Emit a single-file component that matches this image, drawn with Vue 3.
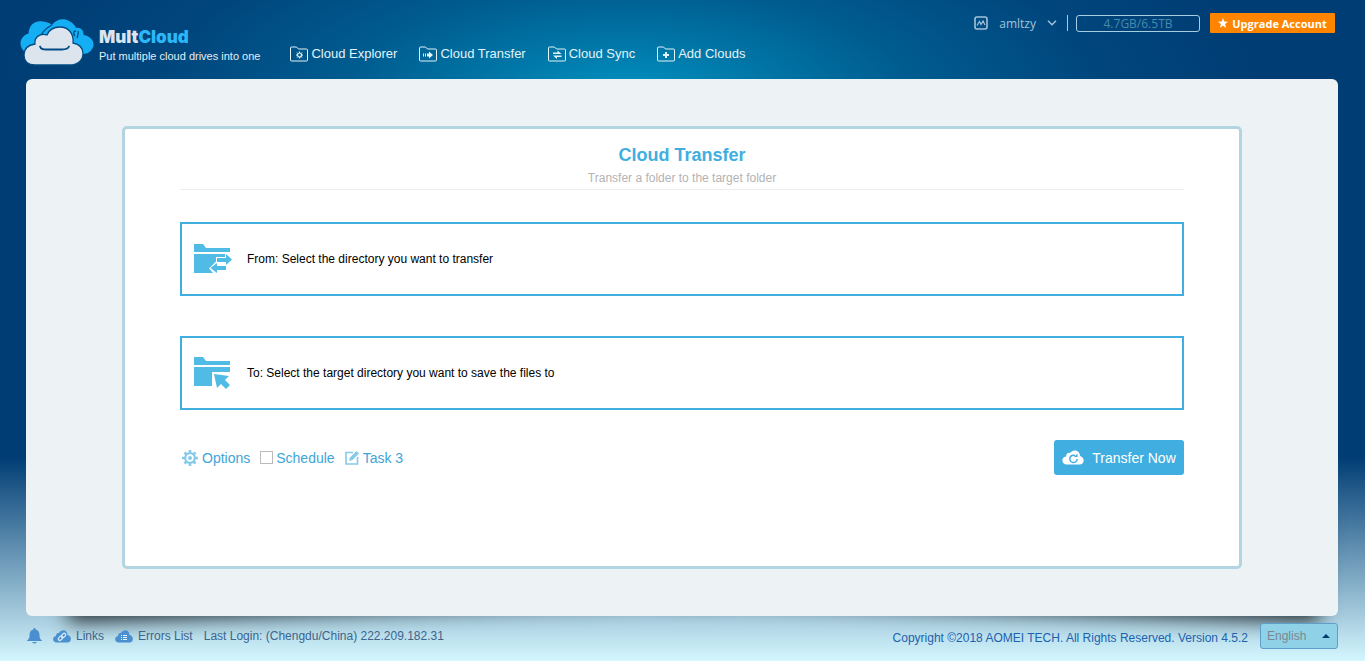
<script setup>
import { ref } from 'vue'

const navItems = [
  { key: 'explorer', label: 'Cloud Explorer' },
  { key: 'transfer', label: 'Cloud Transfer' },
  { key: 'sync', label: 'Cloud Sync' },
  { key: 'add', label: 'Add Clouds' }
]

const user = ref('amltzy')
const storage = ref('4.7GB/6.5TB')
const schedule = ref(false)
const language = ref('English')
</script>

<template>
  <div class="page">
    <header class="header">
      <a class="brand" href="#">
        <svg class="brand-logo" width="74" height="48" viewBox="0 0 74 48">
          <path d="M8 34 C1 33 -2 23 3 18 C5 15.500 7 15 8.500 14.500 C9 5 16 1 23 2.500 C27 3 30 4 32 6 C36 0 44 -1 49 2 C53 4 55 6 56 9 C61 8 64 12 63.500 16 C72 17 76 25 72 30 C70 34 66 35 62 35 Z" fill="#14aef5" />
          <path d="M32 6 C28 8 24 11 21 16 M56 12 C53 12 53 15 55 17 M58 12 C59 14 58 16 57 19" fill="none" stroke="#034b82" stroke-width="1.300" />
          <path d="M15 46 H50 C58 46 63 41 63 34.500 C63 28 58 25 53 24 C54 14 48 8 40 8 C34 8 29 11 27 16 C20 14 14 18 15 25 C8 26 4 30 4 36 C4 42 8 46 15 46 Z" fill="#dce4ee" stroke="#034b82" stroke-width="1.300" />
          <path d="M20 27.500 C21 31 24 30.500 28 30.500 H42 C46 30.500 48 30 49 27.500" fill="none" stroke="#034b82" stroke-width="1.800" stroke-linecap="round" />
        </svg>
        <span class="brand-text">
          <span class="brand-name">Mult<b>Cloud</b></span>
          <span class="brand-slogan">Put multiple cloud drives into one</span>
        </span>
      </a>

      <nav class="nav">
        <a v-for="item in navItems" :key="item.key" class="nav-item" href="#">
          <svg width="18" height="16" viewBox="0 0 18 16">
            <path d="M1.5 15 Q.5 15 .5 14 V2 Q.5 1 1.5 1 H6.5 L8.5 3 H16.5 Q17.5 3 17.5 4 V14 Q17.5 15 16.5 15 Z" fill="none" stroke="currentColor" />
            <g v-if="item.key === 'explorer'" fill="none" stroke="currentColor">
              <circle cx="9.5" cy="9" r="2" stroke-width="1.2" />
              <path d="M9.5 5.5V7M9.5 11v1.5M6 9h1.500M11.500 9H13M7 6.500l1 1M11 10.500l1 1M12 6.500l-1 1M8 10.500l-1 1" />
            </g>
            <path v-else-if="item.key === 'transfer'" d="M4 7.500h1v3H4zM6 7.500h1v3H6zM8 7.500h2V5.500L14 9l-4 3.500v-2H8z" fill="currentColor" />
            <path v-else-if="item.key === 'sync'" d="M5 6.500h4.500V4.500l4 3.500H5zM13.500 9.500H5l4 3.500v-2h4.500z" fill="currentColor" />
            <path v-else d="M8 6h2v2h2v2h-2v2H8v-2H6V8h2z" fill="currentColor" />
          </svg>
          <span>{{ item.label }}</span>
        </a>
      </nav>

      <div class="account">
        <button class="user" type="button">
          <svg width="14" height="14" viewBox="0 0 14 14" fill="none" stroke="currentColor">
            <rect x="1" y="1" width="12" height="12" rx="2" stroke-width="1.6" />
            <path d="M3 9.500 L5.500 5.500 L7 8.500 L9 5 L11 9" stroke-width="1.2" />
          </svg>
          <span>{{ user }}</span>
          <svg width="10" height="6" viewBox="0 0 10 6" fill="none" stroke="currentColor" stroke-width="1.500">
            <path d="M1 .7 L5 4.700 L9 .7" />
          </svg>
        </button>
        <span class="storage">{{ storage }}</span>
        <button class="upgrade" type="button">
          <svg width="10" height="10" viewBox="0 0 10 10">
            <path d="M5 0 L6.300 3.400 L10 3.700 L7.100 6.100 L8.100 9.800 L5 7.700 L1.900 9.800 L2.900 6.100 L0 3.700 L3.700 3.400 Z" fill="#fff" />
          </svg>
          Upgrade Account
        </button>
      </div>
    </header>

    <main class="panel">
      <section class="card">
        <div class="card-head">
          <h1>Cloud Transfer</h1>
          <p>Transfer a folder to the target folder</p>
        </div>

        <button class="picker" type="button">
          <svg width="38" height="32" viewBox="0 0 38 32" fill="#50bce6">
            <path d="M0 1h9l3 4h24v4H0z" />
            <path d="M0 11h31v19H0z" />
            <path d="M15 25.500l7-7h10V31H20z" fill="#fff" />
            <path d="M22 14h15v7H22z" fill="#fff" />
            <path d="M23 15h9v-4l6 5.500-6 5.500v-3h-9zM32 23h-9v-3l-6.500 5L23 30v-3h9z" />
          </svg>
          <span>From: Select the directory you want to transfer</span>
        </button>

        <button class="picker" type="button">
          <svg width="38" height="32" viewBox="0 0 38 32" fill="#50bce6">
            <path d="M0 0h9l3 4h24v4H0z" />
            <path d="M0 10h36v5H18v14H0z" />
            <path d="M20 17l15 2-4 4 5 5-4 4-5-5-4 4z" />
          </svg>
          <span>To: Select the target directory you want to save the files to</span>
        </button>

        <div class="actions">
          <button class="link-btn" type="button">
            <svg width="16" height="16" viewBox="0 0 16 16" fill="none" stroke="#86caea">
              <path d="M8 0v3M8 13v3M0 8h3M13 8h3M2.500 2.500l2 2M11.500 11.500l2 2M13.500 2.500l-2 2M4.500 11.500l-2 2" stroke-width="2.600" />
              <circle cx="8" cy="8" r="4.800" stroke-width="2.200" />
              <circle cx="8" cy="8" r="2" fill="#86caea" stroke="none" />
            </svg>
            Options
          </button>
          <label class="check">
            <input v-model="schedule" type="checkbox" />
            Schedule
          </label>
          <button class="link-btn task" type="button">
            <svg width="14" height="14" viewBox="0 0 14 14">
              <path d="M8 1.500H1V13h11.500V6" fill="none" stroke="#86caea" stroke-width="1.600" />
              <path d="M4 10l1-3.500L11.500 0 14 2.500 7.500 9z" fill="#86caea" />
            </svg>
            Task 3
          </button>
          <button class="transfer-btn" type="button">
            <svg width="22" height="15" viewBox="0 0 22 15">
              <path d="M5 14.500 C-1 14.500 -1 7 4 6.500 C4 3 7 2.500 8 3 C11 -1.500 18 0 18 6 C23 7 23 14.500 17.500 14.500 Z" fill="#fff" />
              <path d="M13 5.500 A3.700 3.700 0 1 0 15.200 9" fill="none" stroke="#40aee0" stroke-width="1.500" />
              <path d="M12 7h3.500V3.500z" fill="#40aee0" />
            </svg>
            Transfer Now
          </button>
        </div>
      </section>
    </main>

    <footer class="footer">
      <div class="footer-left">
        <button class="bell" type="button" aria-label="Notifications">
          <svg width="15" height="16" viewBox="0 0 15 16" fill="#4a90d0">
            <path d="M7.500 0 C8.500 0 8.700 1 8.700 1.500 C11.500 2 12.500 4.500 12.500 7 C12.500 10 13 11 15 12.500 V13 H0 V12.500 C2 11 2.500 10 2.500 7 C2.500 4.500 3.500 2 6.300 1.500 C6.300 1 6.500 0 7.500 0Z" />
            <path d="M5 14h5Q7.500 17 5 14z" />
          </svg>
        </button>
        <a class="foot-link" href="#">
          <svg width="18" height="13" viewBox="0 0 18 13">
            <path d="M4 12.500 C-1 12.500 -1 6.500 3 6 C3 3.500 4.500 2.500 6 3 C8 -1 14.500 -1 14.500 5 C19 5.500 19 12.500 14.500 12.500 Z" fill="#4a90d0" />
            <g fill="none" stroke="#d6edf7" stroke-width="1.200">
              <rect x="5" y="6.700" width="5" height="3" rx="1.500" transform="rotate(-45 7.500 8.200)" />
              <rect x="8" y="4" width="5" height="3" rx="1.500" transform="rotate(-45 10.500 5.500)" />
            </g>
          </svg>
          Links
        </a>
        <a class="foot-link" href="#">
          <svg width="18" height="13" viewBox="0 0 18 13">
            <path d="M4 12.500 C-1 12.500 -1 6.500 3 6 C3 3.500 4.500 2.500 6 3 C8 -1 14.500 -1 14.500 5 C19 5.500 19 12.500 14.500 12.500 Z" fill="#4a90d0" />
            <path d="M6 5.500h1M8 5.500h4M6 7.500h1M8 7.500h4M6 9.500h1M8 9.500h4" stroke="#e8f6fc" />
          </svg>
          Errors List
        </a>
        <span>Last Login: (Chengdu/China) 222.209.182.31</span>
      </div>
      <div class="footer-right">
        <span class="copyright">Copyright ©2018 AOMEI TECH. All Rights Reserved. Version 4.5.2</span>
        <div class="language">
          <select v-model="language" aria-label="Language">
            <option>English</option>
          </select>
        </div>
      </div>
    </footer>
  </div>
</template>

<style>
body {
  margin: 0;
}

* {
  box-sizing: border-box;
}
</style>

<style scoped>
.page {
  min-height: 100vh;
  display: flex;
  flex-direction: column;
  position: relative;
  z-index: 0;
  font-family: "Liberation Sans", Arial, sans-serif;
  font-size: 12px;
  background:
    radial-gradient(640px 240px at 46% 95px, #0093c2 0%, rgba(0, 134, 181, 0.85) 18%, rgba(0, 116, 165, 0.55) 45%, rgba(0, 94, 150, 0.25) 75%, rgba(0, 61, 116, 0) 100%) no-repeat 0 0 / 100% 79px,
    linear-gradient(to bottom, #003d74 0%, #003d74 69%, #a6cbdd 93%, #d5f8ff 100%);
}

button {
  font: inherit;
  padding: 0;
  border: none;
  background: none;
  cursor: pointer;
}

a {
  color: inherit;
  text-decoration: none;
}

svg {
  flex-shrink: 0;
}

/* header */
.header {
  height: 79px;
  display: flex;
  align-items: flex-start;
  padding: 0 30px 0 20px;
  color: #e3eef5;
}

.brand {
  display: flex;
  gap: 5px;
  padding-top: 19px;
}

.brand-text {
  display: flex;
  flex-direction: column;
  padding-top: 8px;
}

.brand-name {
  font-family: Inter, sans-serif;
  font-size: 17px;
  line-height: 21px;
  font-weight: 900;
  color: #dce4ee;
}

.brand-name b {
  font-weight: 900;
  color: #2cb8f8;
}

.brand-slogan {
  font-size: 11px;
  line-height: 16px;
}

.nav {
  display: flex;
  gap: 22px;
  padding: 45px 0 0 30px;
}

.nav-item {
  display: flex;
  align-items: center;
  gap: 3px;
  font-size: 13px;
  line-height: 17px;
  color: #e3f3fa;
}

.account {
  display: flex;
  align-items: center;
  margin-left: auto;
  padding-top: 13px;
  font-family: "Open Sans", sans-serif;
}

.user {
  display: flex;
  align-items: center;
  gap: 11px;
  height: 16px;
  padding-right: 10px;
  border-right: 1px solid #a9cde0;
  color: #a3c3da;
}

.storage {
  width: 124px;
  height: 17px;
  margin: 0 10px 0 8px;
  border: 1px solid #a9cde0;
  border-radius: 3px;
  font-size: 12px;
  line-height: 15px;
  text-align: center;
  color: #458bad;
}

.upgrade {
  display: flex;
  align-items: center;
  justify-content: center;
  gap: 4px;
  width: 125px;
  height: 20px;
  border-radius: 1px;
  background: #ff8500;
  color: #fff;
  font-size: 11px;
  font-weight: 700;
}

/* panel */
.panel {
  position: relative;
  flex: 1;
  display: flex;
  margin: 0 27px 0 26px;
  padding: 47px 96px;
  border-radius: 6px;
  background: #edf2f5;
}

/* lifted corners */
.panel::before,
.panel::after {
  content: "";
  position: absolute;
  z-index: -2;
  bottom: 26px;
  left: 40px;
  width: 50%;
  height: 20%;
  box-shadow: 0 20px 20px rgba(0, 0, 0, 0.8);
  transform: rotate(-2deg);
}

.panel::after {
  left: auto;
  right: 16px;
  transform: rotate(2deg);
}

.card {
  flex: 1;
  padding: 15px 55px 91px;
  border: 3px solid #b2d5e1;
  border-radius: 5px;
  background: #fff;
}

.card-head {
  margin-bottom: 32px;
  padding-bottom: 3px;
  border-bottom: 1px solid #eee;
  text-align: center;
}

.card-head h1 {
  margin: 0;
  font-size: 18px;
  line-height: 22px;
  color: #40aee0;
}

.card-head p {
  margin: 4px 0 0;
  line-height: 16px;
  color: #b3b3b3;
}

.picker {
  display: flex;
  align-items: center;
  gap: 15px;
  width: 100%;
  height: 74px;
  margin-bottom: 40px;
  padding: 0 12px;
  border: 2px solid #42aee0;
  color: #000;
}

.actions {
  display: flex;
  align-items: center;
  margin-top: -10px;
  font-size: 14px;
  color: #40aee0;
}

.link-btn,
.check {
  display: flex;
  align-items: center;
  gap: 4px;
  margin-right: 10px;
  color: #40a5d8;
}

.link-btn {
  padding-left: 2px;
}

.task {
  padding: 0;
}

.check {
  gap: 3px;
  cursor: pointer;
}

.check input {
  appearance: none;
  width: 13px;
  height: 13px;
  margin: 0;
  border: 1px solid #bbb;
  background: #fff;
}

.check input:checked {
  background: #40aee0;
}

.transfer-btn {
  display: flex;
  align-items: center;
  justify-content: center;
  gap: 8px;
  width: 130px;
  height: 35px;
  margin-left: auto;
  border-radius: 3px;
  background: #40aee0;
  color: #fff;
}

.transfer-btn:hover {
  background: #2f9fd2;
}

/* footer */
.footer {
  display: flex;
  justify-content: space-between;
  height: 45px;
  margin-bottom: 1px;
  padding: 0 27px;
  color: #3c648c;
}

.footer-left {
  display: flex;
  align-items: center;
  gap: 11px;
  height: 40px;
}

.bell {
  display: flex;
}

.foot-link {
  display: flex;
  align-items: center;
  gap: 5px;
}

.footer-right {
  display: flex;
  align-items: center;
  gap: 12px;
  height: 40px;
}

.copyright {
  padding-top: 3px;
  color: #1c62ad;
}

.language {
  position: relative;
}

.language::after {
  content: "";
  position: absolute;
  right: 8px;
  top: 11px;
  border: 4px solid transparent;
  border-top: none;
  border-bottom-color: #003d74;
  pointer-events: none;
}

.language select {
  appearance: none;
  display: block;
  width: 78px;
  height: 26px;
  padding: 0 6px;
  border: 1px solid #5c9fca;
  border-radius: 3px;
  background: #8fd2e8;
  font: inherit;
  color: #7b8790;
}
</style>
